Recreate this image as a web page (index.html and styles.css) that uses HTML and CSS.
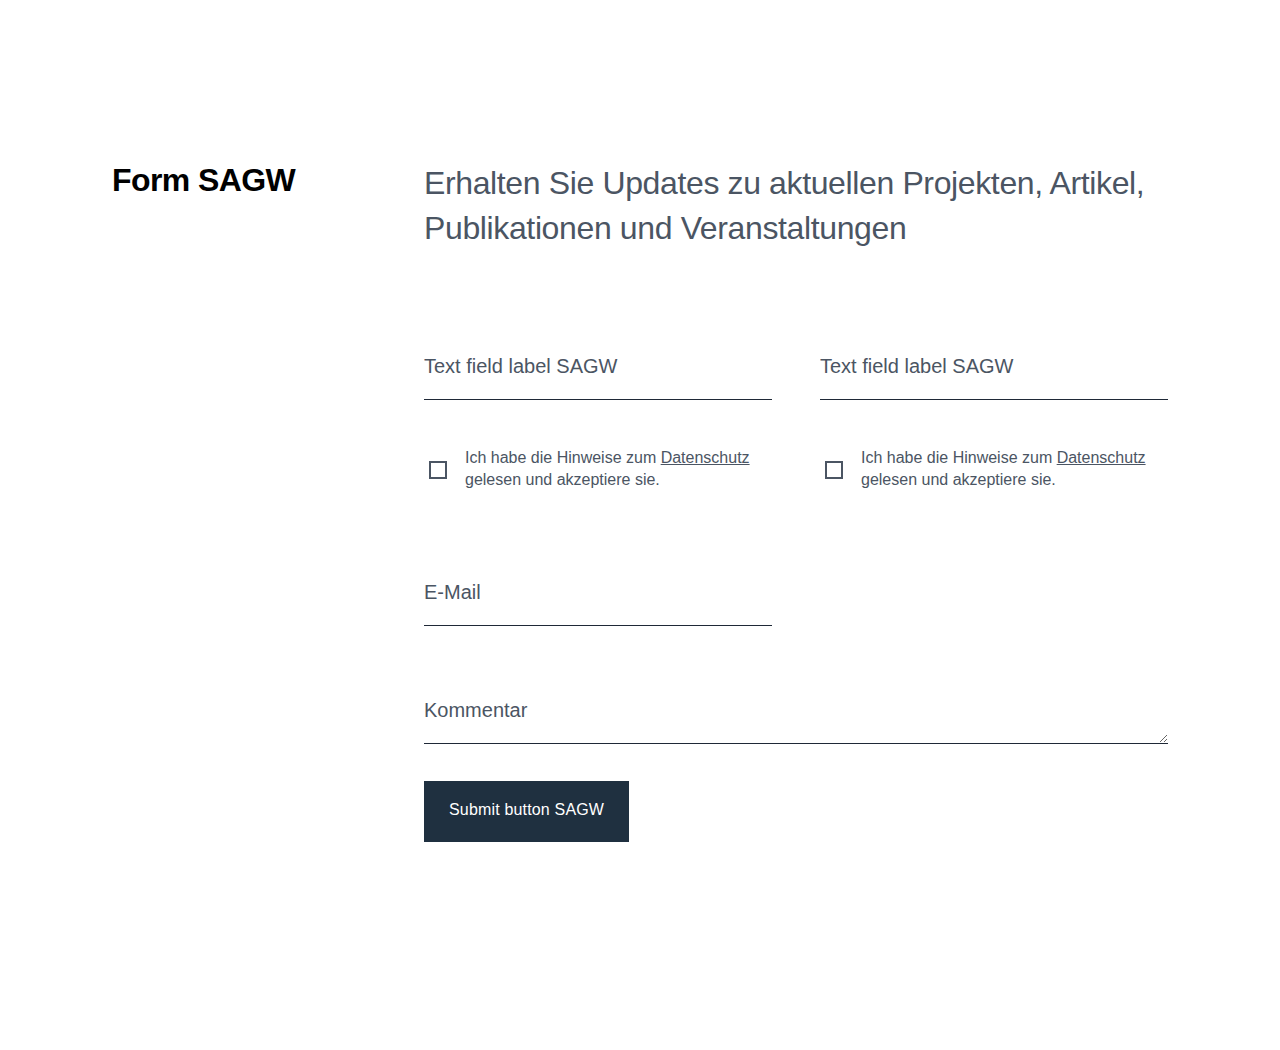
FILE: index.html
```html
<!DOCTYPE html>
<html lang="de">
<head>
<meta charset="utf-8">
<title>Form SAGW</title>
<link rel="stylesheet" href="styles.css">
</head>
<body>
<main class="section">
  <h2 class="section-title">Form SAGW</h2>
  <div class="content">
    <p class="lead">Erhalten Sie Updates zu aktuellen Projekten, Artikel, Publikationen und Veranstaltungen</p>
    <form class="form">
      <div class="row">
        <input class="field" type="text" placeholder="Text field label SAGW">
        <input class="field" type="text" placeholder="Text field label SAGW">
      </div>
      <div class="row checks">
        <label class="check"><span class="box"></span><span class="check-text">Ich habe die Hinweise zum <a href="#">Datenschutz</a> gelesen und akzeptiere sie.</span></label>
        <label class="check"><span class="box"></span><span class="check-text">Ich habe die Hinweise zum <a href="#">Datenschutz</a> gelesen und akzeptiere sie.</span></label>
      </div>
      <div class="row email-row">
        <input class="field" type="email" placeholder="E-Mail">
      </div>
      <textarea class="field comment" placeholder="Kommentar"></textarea>
      <div><button class="submit" type="button">Submit button SAGW</button></div>
    </form>
  </div>
</main>
</body>
</html>
```

FILE: styles.css
```css
* { box-sizing: border-box; }
html, body { margin: 0; padding: 0; background: #fff; }
body { font-family: "Liberation Sans", Arial, sans-serif; color: #4b5563; }

.section {
  width: 1056px;
  margin: 0 auto;
  padding-top: 158px;
  display: grid;
  grid-template-columns: 312px 744px;
}

.section-title {
  margin: 0;
  font-size: 32px;
  line-height: 44px;
  font-weight: 700;
  letter-spacing: -0.6px;
  color: #000;
}

.lead {
  margin: 3px 0 0 0;
  font-size: 32px;
  line-height: 45px;
  letter-spacing: -0.37px;
  color: #4b5563;
}

.form {
  margin-top: 93px;
  display: flex;
  flex-direction: column;
}

.row {
  display: grid;
  grid-template-columns: 348px 348px;
  column-gap: 48px;
}

.field {
  display: block;
  width: 100%;
  border: 0;
  border-bottom: 1px solid #1f2937;
  border-radius: 0;
  background: transparent;
  font-family: "Liberation Sans", Arial, sans-serif;
  font-size: 20px;
  color: #1f2937;
  padding: 0 0 10px 0;
  height: 56px;
  outline: none;
}
.field::placeholder { color: #4b5563; opacity: 1; }

.checks { margin-top: 47px; }

.check {
  display: flex;
  align-items: center;
  gap: 18px;
  font-size: 16px;
  line-height: 22px;
  color: #4b5563;
}
.box {
  flex: none;
  width: 18px;
  height: 18px;
  border: 2px solid #4b5563;
  margin-left: 5px;
  margin-top: 2px;
}
.check-text a { color: #4b5563; text-decoration: underline; }

.email-row { margin-top: 79px; }

.comment {
  margin-top: 62px;
  width: 744px;
  height: 56px;
  resize: vertical;
  padding: 10px 0 0 0;
  line-height: 24px;
}

.submit {
  margin-top: 37px;
  background: #1f3040;
  color: #fff;
  border: 0;
  border-radius: 0;
  font-family: "Liberation Sans", Arial, sans-serif;
  font-size: 16px;
  line-height: 21px;
  letter-spacing: 0.17px;
  padding: 18px 25px 22px;
  cursor: pointer;
}
```
